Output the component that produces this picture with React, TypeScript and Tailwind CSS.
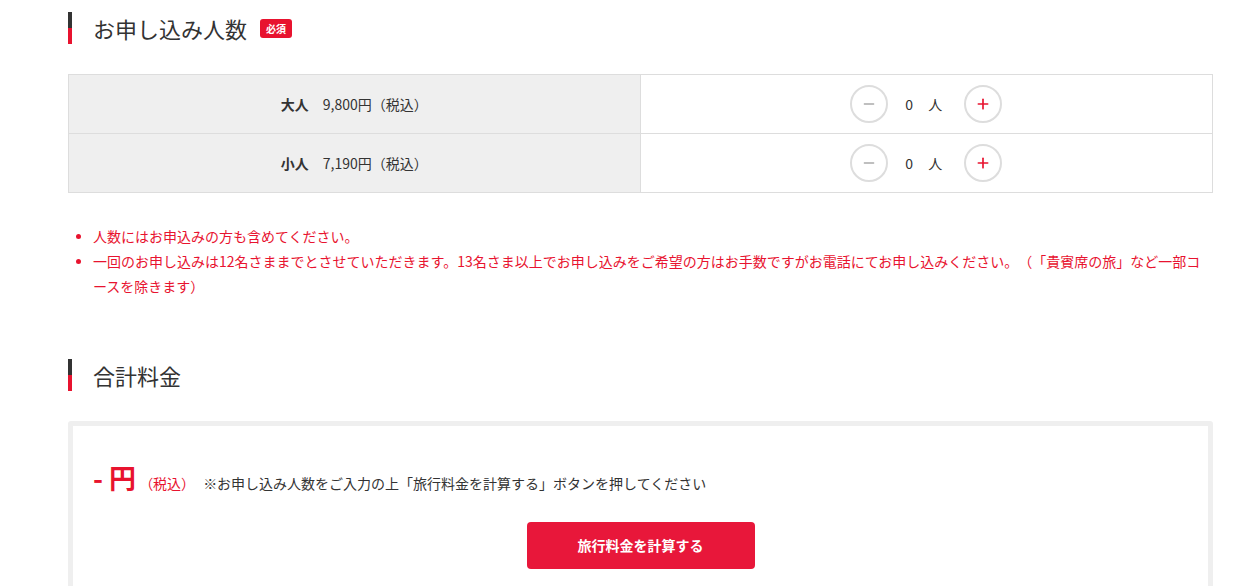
import { Minus, Plus } from "lucide-react"

const font = { fontFamily: '"Noto Sans CJK JP", "Noto Sans", sans-serif' }

function Heading({ title, required }: { title: string; required?: boolean }) {
  return (
    <div className="flex items-center h-[32px]">
      {/* red/black bar */}
      <div className="w-[4px] h-[32px] flex flex-col">
        <div className="flex-1 bg-[#333]" />
        <div className="flex-1 bg-[#e8132f]" />
      </div>
      <h2 className="ml-[21px] text-[22px] text-[#333] leading-none">{title}</h2>
      {required && (
        <span className="ml-[13px] bg-[#e8132f] text-white text-[10px] font-bold px-[6px] h-[19px] leading-[19px] rounded-[3px]">
          必須
        </span>
      )}
    </div>
  )
}

function Row({ label, price }: { label: string; price: string }) {
  return (
    <div className="flex h-[59px] border-b border-[#ddd] last:border-b-0 last:h-[58px]">
      <div className="w-1/2 bg-[#efefef] border-r border-[#ddd] flex items-center justify-center text-[14px] text-[#333]">
        <span className="font-bold">{label}</span>
        <span className="ml-[14px]">{price}（税込）</span>
      </div>
      <div className="w-1/2 flex items-center justify-center">
        <button className="w-[38px] h-[38px] rounded-full border-2 border-[#ddd] flex items-center justify-center text-[#aaa]">
          <Minus size={16} strokeWidth={2} />
        </button>
        <span className="ml-[17px] text-[14px] text-[#333]">0</span>
        <span className="ml-[15px] text-[14px] text-[#333]">人</span>
        <button className="ml-[22px] w-[38px] h-[38px] rounded-full border-2 border-[#ddd] flex items-center justify-center text-[#e8132f]">
          <Plus size={16} strokeWidth={2.5} />
        </button>
      </div>
    </div>
  )
}

function Note({ children }: { children: React.ReactNode }) {
  return (
    <li className="flex">
      <span className="w-[25px] h-[25px] flex items-center pl-[8px]">
        <span className="w-[5px] h-[5px] rounded-full bg-[#e8132f]" />
      </span>
      <span className="flex-1 pr-[4px]">{children}</span>
    </li>
  )
}

export default function App() {
  return (
    <div className="bg-white min-h-[586px] overflow-hidden [text-spacing-trim:space-all]" style={font}>
      <div className="ml-[68px] w-[1145px] pt-[12px]">
        <Heading title="お申し込み人数" required />

        {/* table */}
        <div className="mt-[30px] border border-[#ddd]">
          <Row label="大人" price="9,800円" />
          <Row label="小人" price="7,190円" />
        </div>

        {/* notes */}
        <ul className="mt-[31px] text-[14px] leading-[25px] text-[#e8132f]">
          <Note>人数にはお申込みの方も含めてください。</Note>
          <Note>
            一回のお申し込みは12名さままでとさせていただきます。13名さま以上でお申し込みをご希望の方はお手数ですがお電話にてお申し込みください。（「貴賓席の旅」など一部コースを除きます）
          </Note>
        </ul>

        <div className="mt-[60px]">
          <Heading title="合計料金" />
        </div>

        {/* total box */}
        <div className="mt-[30px] border-[5px] border-[#efefef] rounded-t-[3px] px-[20px] pt-[38px] pb-[20px]">
          <div className="flex items-baseline">
            <span className="text-[27px] font-bold text-[#e8132f] leading-none">- 円</span>
            <span className="ml-[3px] text-[14px] text-[#e8132f]">（税込）</span>
            <span className="ml-[8px] text-[14px] text-[#333]">
              ※お申し込み人数をご入力の上「旅行料金を計算する」ボタンを押してください
            </span>
          </div>
          <div className="mt-[28px] flex justify-center">
            <button className="w-[228px] h-[47px] bg-[#e8173a] rounded-[4px] text-white text-[14px] font-bold">
              旅行料金を計算する
            </button>
          </div>
        </div>
      </div>
    </div>
  )
}
